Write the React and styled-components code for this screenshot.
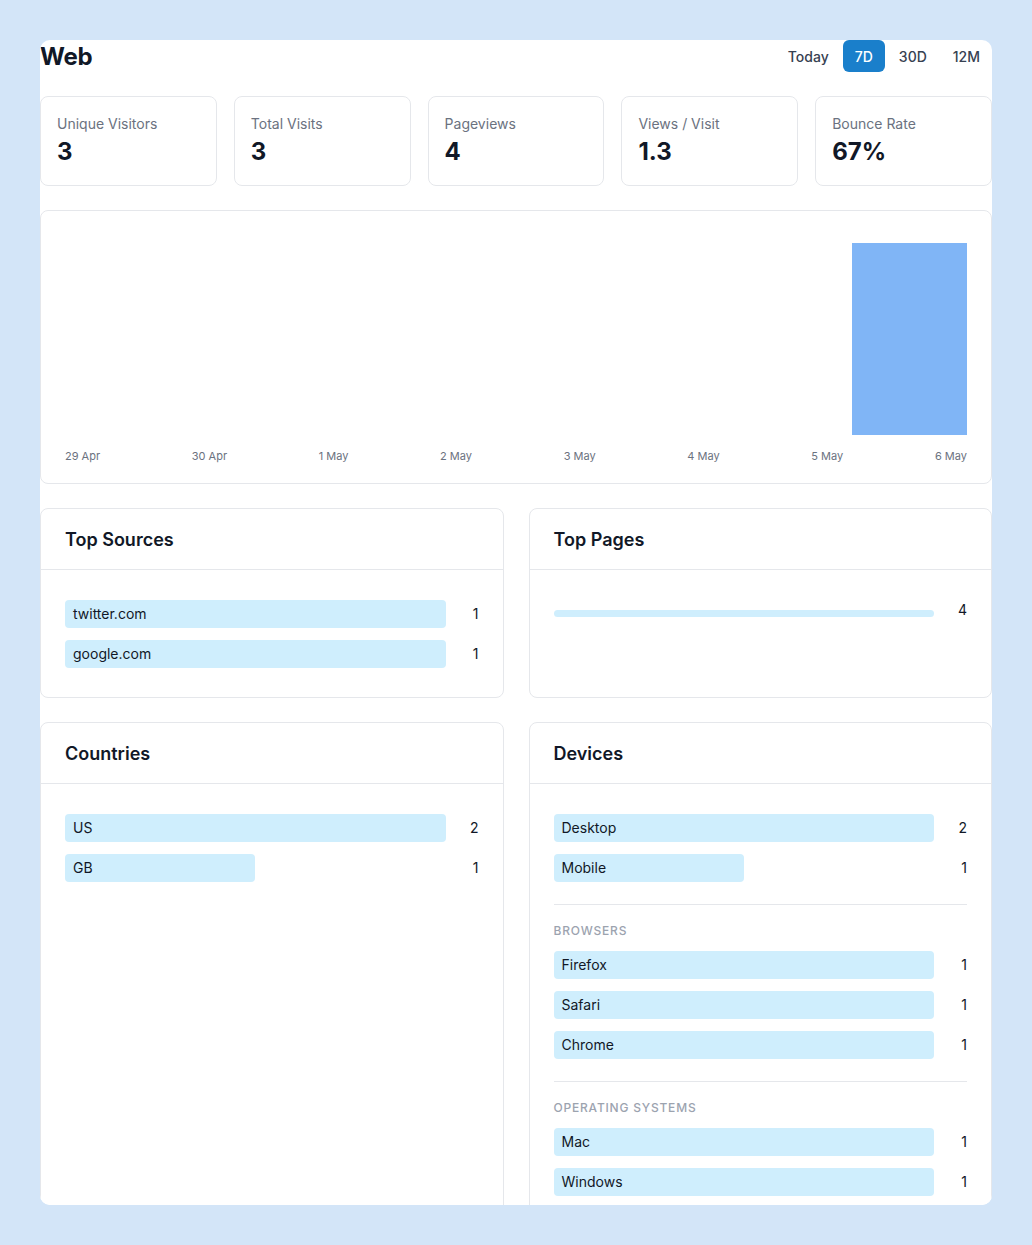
import React from "react";
import styled, { createGlobalStyle } from "styled-components";

const Global = createGlobalStyle`
  html, body { margin: 0; background: #d3e5f8; }
  body { padding: 40px; font-family: Inter, "Noto Sans", sans-serif; color: #111827; }
  * { box-sizing: border-box; }
`;

const Panel = styled.div`
  background: #fff; border-radius: 10px; height: 1165px; overflow: hidden;
  display: flex; flex-direction: column; gap: 24px;
`;
const Header = styled.div`display: flex; justify-content: space-between; align-items: center; height: 32px;`;
const Title = styled.h1`margin: 0; font-size: 24px; font-weight: 700; letter-spacing: -0.3px;`;
const Tabs = styled.div`display: flex; gap: 2px;`;
const Tab = styled.button`
  border: 0; border-radius: 6px; height: 32px; padding: 0 12px; font: 500 14px Inter, sans-serif;
  background: ${p => (p.$active ? "#1a7fcb" : "transparent")};
  color: ${p => (p.$active ? "#fff" : "#374151")};
`;
const Stats = styled.div`display: grid; grid-template-columns: repeat(5, 1fr); gap: 17px;`;
const Card = styled.div`border: 1px solid #e5e7eb; border-radius: 8px; background: #fff;`;
const Stat = styled(Card)`height: 90px; padding: 17px 16px;`;
const StatLabel = styled.div`font-size: 14px; color: #6b7280; line-height: 20px;`;
const StatValue = styled.div`font-size: 24px; font-weight: 700; line-height: 32px; margin-top: 2px;`;
const Chart = styled(Card)`height: 274px; padding: 32px 24px 20px; display: flex; flex-direction: column;`;
const Plot = styled.div`flex: 1; display: grid; grid-template-columns: repeat(8, 1fr); gap: 16px; align-items: end;`;
const Bar = styled.div`background: #80b5f6; width: calc(100% + 16px); margin-left: -16px;`;
const Axis = styled.div`display: flex; justify-content: space-between; margin-top: 14px; font-size: 11px; color: #6b7280; height: 14px;`;
const Grid = styled.div`display: grid; grid-template-columns: 1fr 1fr; gap: 24px 25px;`;
const Box = styled(Card)`display: flex; flex-direction: column; min-height: ${p => p.$h || 190}px;`;
const BoxHead = styled.div`height: 61px; border-bottom: 1px solid #e5e7eb; padding: 0 24px; display: flex; align-items: center; font-size: 18px; font-weight: 600;`;
const BoxBody = styled.div`padding: 30px 24px 24px; display: flex; flex-direction: column; gap: 12px;`;
const Row = styled.div`display: flex; align-items: center; gap: 12px;`;
const Track = styled.div`flex: 1;`;
const Fill = styled.div`
  background: #cfeefd; border-radius: 4px; height: ${p => p.$thin ? "7px" : "28px"};
  font-size: 14px; line-height: 28px; padding-left: 8px; white-space: nowrap; color: #111827;
  margin-top: ${p => p.$thin ? "6px" : 0};
`;
const Count = styled.div`width: 21px; text-align: right; font-size: 14px; color: #111827; align-self: flex-start; line-height: 28px;`;
const Divider = styled.div`height: 1px; background: #e5e7eb; margin: 10px 0 6px;`;
const Section = styled.div`font-size: 12px; font-weight: 500; letter-spacing: 0.8px; color: #9ca3af; text-transform: uppercase; line-height: 16px; margin-bottom: 0;`;

const List = ({ items, max }) => items.map(([l, v]) => (
  <Row key={l}><Track><Fill style={{ width: `${(v / max) * 100}%` }}>{l}</Fill></Track><Count>{v}</Count></Row>
));

export default function App() {
  const days = ["29 Apr", "30 Apr", "1 May", "2 May", "3 May", "4 May", "5 May", "6 May"];
  return (
    <>
      <Global />
      <Panel>
        <Header>
          <Title>Web</Title>
          <Tabs><Tab>Today</Tab><Tab $active>7D</Tab><Tab>30D</Tab><Tab>12M</Tab></Tabs>
        </Header>
        <Stats>
          {[["Unique Visitors", "3"], ["Total Visits", "3"], ["Pageviews", "4"], ["Views / Visit", "1.3"], ["Bounce Rate", "67%"]].map(([l, v]) => (
            <Stat key={l}><StatLabel>{l}</StatLabel><StatValue>{v}</StatValue></Stat>
          ))}
        </Stats>
        <Chart>
          <Plot>{days.map((d, i) => <div key={d}>{i === 7 && <Bar style={{ height: 192 }} />}</div>)}</Plot>
          <Axis>{days.map(d => <span key={d}>{d}</span>)}</Axis>
        </Chart>
        <Grid>
          <Box>
            <BoxHead>Top Sources</BoxHead>
            <BoxBody><List items={[["twitter.com", 1], ["google.com", 1]]} max={1} /></BoxBody>
          </Box>
          <Box>
            <BoxHead>Top Pages</BoxHead>
            <BoxBody><Row><Track><Fill $thin /></Track><Count style={{ lineHeight: "20px" }}>4</Count></Row></BoxBody>
          </Box>
          <Box $h={520}>
            <BoxHead>Countries</BoxHead>
            <BoxBody><List items={[["US", 2], ["GB", 1]]} max={2} /></BoxBody>
          </Box>
          <Box $h={520}>
            <BoxHead>Devices</BoxHead>
            <BoxBody>
              <List items={[["Desktop", 2], ["Mobile", 1]]} max={2} />
              <Divider />
              <Section>Browsers</Section>
              <List items={[["Firefox", 1], ["Safari", 1], ["Chrome", 1]]} max={1} />
              <Divider />
              <Section>Operating Systems</Section>
              <List items={[["Mac", 1], ["Windows", 1]]} max={1} />
            </BoxBody>
          </Box>
        </Grid>
      </Panel>
    </>
  );
}
